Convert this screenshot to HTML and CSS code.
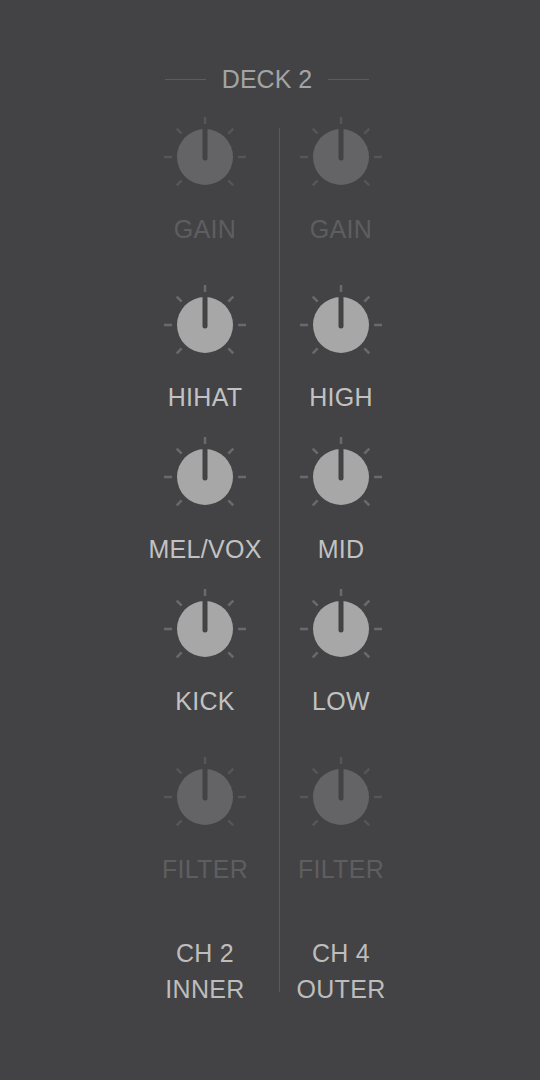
FILE: index.html
```html
<!DOCTYPE html>
<html lang="en">
<head>
  <meta charset="UTF-8" />
  <meta name="viewport" content="width=device-width, initial-scale=1.0" />
  <title>Deck 2 EQ</title>
  <link rel="stylesheet" href="styles.css">
</head>
<body>
  <svg width="0" height="0" class="defs">
    <symbol id="knob" viewBox="0 0 90 90">
      <g stroke-width="2.5">
        <line x1="45" y1="12" x2="45" y2="5" />
        <line x1="21.7" y1="21.7" x2="16.7" y2="16.7" />
        <line x1="68.3" y1="21.7" x2="73.3" y2="16.7" />
        <line x1="12" y1="45" x2="4" y2="45" />
        <line x1="78" y1="45" x2="86" y2="45" />
        <line x1="21.7" y1="68.3" x2="16.7" y2="73.3" />
        <line x1="68.3" y1="68.3" x2="73.3" y2="73.3" />
      </g>
      <circle cx="45" cy="45" r="28" fill="currentColor" stroke="none" />
      <line x1="45" y1="46" x2="45" y2="18" stroke="#434345" stroke-width="5" stroke-linecap="round" />
    </symbol>
  </svg>

  <div class="deck">
    <div class="deck-title">
      <span class="rule"></span>
      <span>DECK 2</span>
      <span class="rule"></span>
    </div>

    <div class="columns">
      <div class="channel">
        <div class="control off spaced">
          <svg class="knob"><use href="#knob" /></svg>
          <div class="label">GAIN</div>
        </div>
        <div class="control">
          <svg class="knob"><use href="#knob" /></svg>
          <div class="label">HIHAT</div>
        </div>
        <div class="control">
          <svg class="knob"><use href="#knob" /></svg>
          <div class="label">MEL/VOX</div>
        </div>
        <div class="control spaced">
          <svg class="knob"><use href="#knob" /></svg>
          <div class="label">KICK</div>
        </div>
        <div class="control off">
          <svg class="knob"><use href="#knob" /></svg>
          <div class="label">FILTER</div>
        </div>
        <div class="channel-name">CH 2<br>INNER</div>
      </div>

      <div class="divider"></div>

      <div class="channel">
        <div class="control off spaced">
          <svg class="knob"><use href="#knob" /></svg>
          <div class="label">GAIN</div>
        </div>
        <div class="control">
          <svg class="knob"><use href="#knob" /></svg>
          <div class="label">HIGH</div>
        </div>
        <div class="control">
          <svg class="knob"><use href="#knob" /></svg>
          <div class="label">MID</div>
        </div>
        <div class="control spaced">
          <svg class="knob"><use href="#knob" /></svg>
          <div class="label">LOW</div>
        </div>
        <div class="control off">
          <svg class="knob"><use href="#knob" /></svg>
          <div class="label">FILTER</div>
        </div>
        <div class="channel-name">CH 4<br>OUTER</div>
      </div>
    </div>
  </div>
</body>
</html>
```

FILE: styles.css
```css
body {
  margin: 0;
  background: #434345;
  font-family: "Liberation Sans", Arial, sans-serif;
  color: #c0c0c0;
}
.defs {
  position: absolute;
}
.deck {
  width: 540px;
  height: 1080px;
  padding-top: 64px;
  box-sizing: border-box;
}
.deck-title {
  display: flex;
  justify-content: center;
  align-items: center;
  gap: 16px;
  margin-left: -6px;
  font-size: 25px;
  line-height: 30px;
  color: #a4a4a4;
}
.rule {
  width: 41px;
  height: 1px;
  background: #5c5c5e;
}
.columns {
  display: flex;
  padding-left: 145px;
  margin-top: 18px;
}
.channel {
  width: 120px;
  display: flex;
  flex-direction: column;
  align-items: center;
}
.divider {
  width: 1px;
  margin: 16px 1px 15px 14px;
  background: #59595b;
}
.control {
  display: flex;
  flex-direction: column;
  align-items: center;
  margin-bottom: 20px;
}
.control.spaced {
  margin-bottom: 36px;
}
.knob {
  width: 90px;
  height: 90px;
  color: #a7a7a7;
  stroke: #6a6a6c;
}
.label {
  margin-top: 12px;
  font-size: 25px;
  line-height: 30px;
  letter-spacing: 0.3px;
  color: #c2c2c2;
  white-space: nowrap;
}
.off .knob {
  color: #646466;
  stroke: #565658;
}
.off .label {
  color: #5e5e60;
}
.channel-name {
  margin-top: 31px;
  font-size: 25px;
  line-height: 36px;
  letter-spacing: 0.3px;
  text-align: center;
  color: #bdbdbd;
}
```
